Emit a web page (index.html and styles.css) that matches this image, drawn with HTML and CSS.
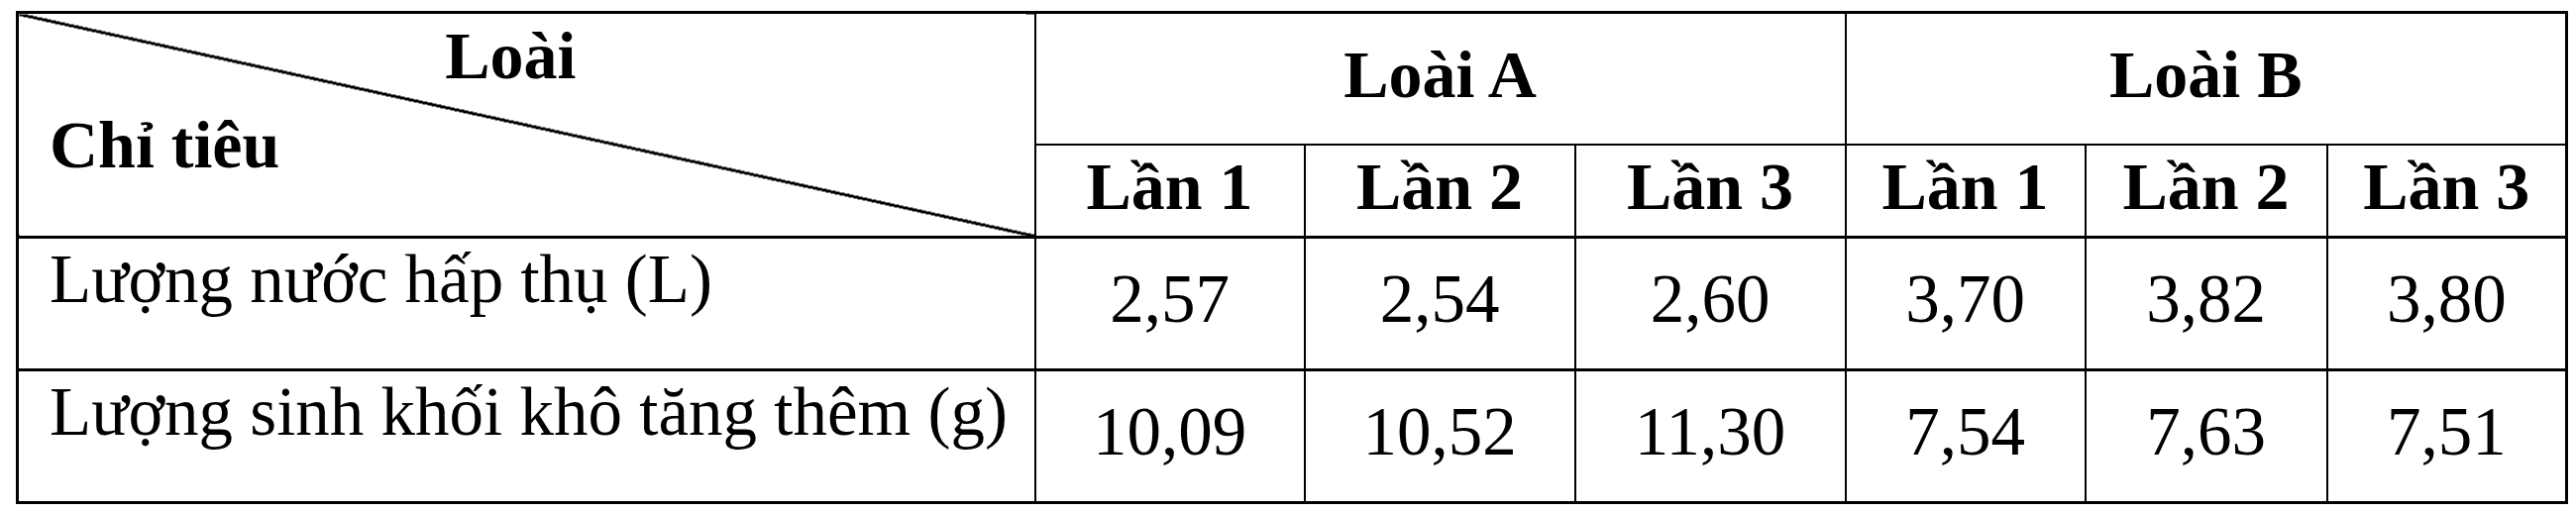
FILE: index.html
```html
<!DOCTYPE html>
<html>
<head>
<title>Lượng nước hấp thụ và sinh khối</title>
<meta charset="utf-8">
<link rel="stylesheet" href="styles.css">
</head>
<body>
<table class="data">
	<colgroup>
		<col class="c-label">
		<col class="c-a"><col class="c-a2"><col class="c-a2">
		<col class="c-b"><col class="c-b2"><col class="c-b">
	</colgroup>
	<tr class="r-head">
		<th rowspan="2" class="corner">
			<div class="corner-top">Loài</div>
			<div class="corner-bottom">Chỉ tiêu</div>
		</th>
		<th colspan="3">Loài A</th>
		<th colspan="3">Loài B</th>
	</tr>
	<tr class="r-sub">
		<th>Lần 1</th>
		<th>Lần 2</th>
		<th>Lần 3</th>
		<th>Lần 1</th>
		<th>Lần 2</th>
		<th>Lần 3</th>
	</tr>
	<tr class="r-data">
		<td class="label">Lượng nước hấp thụ (L)</td>
		<td>2,57</td>
		<td>2,54</td>
		<td>2,60</td>
		<td>3,70</td>
		<td>3,82</td>
		<td>3,80</td>
	</tr>
	<tr class="r-data">
		<td class="label">Lượng sinh khối khô tăng thêm (g)</td>
		<td>10,09</td>
		<td>10,52</td>
		<td>11,30</td>
		<td>7,54</td>
		<td>7,63</td>
		<td>7,51</td>
	</tr>
</table>
</body>
</html>
```

FILE: styles.css
```css
body {
	margin: 0;
	background-color: #fff;
	color: #000;
	font-family: "Liberation Serif", "Times New Roman", serif;
	font-size: 68px;
}
table.data {
	border-collapse: collapse;
	margin: 11px 0 0 16px;
	border: 3px solid #000;
}
col.c-label {
	width: 1027px;
}
col.c-a {
	width: 272px;
}
col.c-a2 {
	width: 273px;
}
col.c-b {
	width: 242px;
}
col.c-b2 {
	width: 244px;
}
th, td {
	border: 2px solid #000;
	padding: 0 0 8px 0;
	text-align: center;
	vertical-align: middle;
	white-space: nowrap;
}
th {
	font-weight: bold;
}
td {
	font-size: 69px;
}
tr.r-head {
	height: 133px;
}
tr.r-sub {
	height: 94px;
}
tr.r-data {
	height: 134px;
}
tr.r-data td {
	border-top-width: 3px;
}
td.label {
	text-align: left;
	vertical-align: top;
	padding: 2px 0 0 31px;
}
th.corner {
	text-align: left;
	vertical-align: top;
	padding: 3px 0 0 31px;
	background: linear-gradient(to bottom left, transparent calc(50% - 1.5px), #000 calc(50% - 1.5px), #000 calc(50% + 1.5px), transparent calc(50% + 1.5px));
}
.corner-top {
	text-align: center;
	margin-right: 63px;
}
.corner-bottom {
	margin-top: 11px;
}
```
